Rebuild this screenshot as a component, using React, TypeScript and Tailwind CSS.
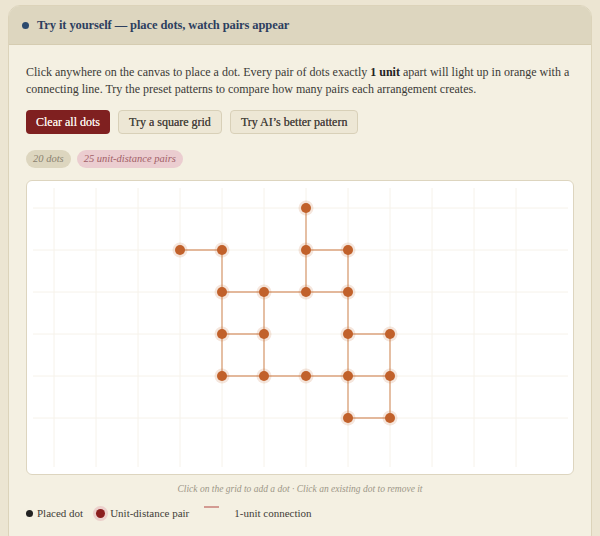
import React from "react";

const STEP = 42;
const OFF = 27;

// grid coordinates (column, row) of the placed dots
const DOTS: [number, number][] = [
  [3, 1], [4, 1], [6, 0], [6, 1], [7, 1],
  [4, 2], [5, 2], [6, 2], [7, 2],
  [4, 3], [5, 3], [7, 3], [8, 3],
  [4, 4], [5, 4], [6, 4], [7, 4], [8, 4],
  [7, 5], [8, 5],
];

function unitPairs() {
  const pairs: [number, number][] = [];
  for (let a = 0; a < DOTS.length; a++) {
    for (let b = a + 1; b < DOTS.length; b++) {
      const dx = DOTS[a][0] - DOTS[b][0];
      const dy = DOTS[a][1] - DOTS[b][1];
      if (dx * dx + dy * dy === 1) pairs.push([a, b]);
    }
  }
  return pairs;
}

const px = (i: number) => OFF + STEP * i;

function DotCanvas() {
  const pairs = unitPairs();
  return (
    <div className="mt-3 rounded-md border border-[#ddd5bf] bg-white overflow-hidden">
      <svg width="546" height="293" className="block">
        {Array.from({ length: 12 }, (_, k) => (
          <line key={"v" + k} x1={px(k)} x2={px(k)} y1={7} y2={286} stroke="#f6f2ea" strokeWidth="1" />
        ))}
        {Array.from({ length: 6 }, (_, k) => (
          <line key={"h" + k} x1={6} x2={541} y1={px(k)} y2={px(k)} stroke="#f6f2ea" strokeWidth="1" />
        ))}
        {pairs.map(([a, b]) => (
          <line
            key={a + "-" + b}
            x1={px(DOTS[a][0])}
            y1={px(DOTS[a][1])}
            x2={px(DOTS[b][0])}
            y2={px(DOTS[b][1])}
            stroke="#e3b89b"
            strokeWidth="1.8"
          />
        ))}
        {DOTS.map(([i, j]) => (
          <g key={i + "," + j}>
            <circle cx={px(i)} cy={px(j)} r="7.5" fill="#c1612b" opacity="0.16" />
            <circle cx={px(i)} cy={px(j)} r="5" fill="#c1612b" />
          </g>
        ))}
      </svg>
    </div>
  );
}

export default function App() {
  return (
    <div className="min-h-screen bg-[#ece5d2] px-2 pt-[5px] font-['Liberation_Serif',serif]">
      <div className="rounded-xl border border-[#dcd3ba] bg-[#f4f0e2] overflow-hidden pb-6">
        <div className="h-[39px] flex items-center gap-[8px] px-[13px] bg-[#ddd6bf] border-b border-[#d5ccb1]">
          <span className="w-[7px] h-[7px] rounded-full bg-[#2c4a6e]" />
          <h2 className="text-[12.5px] font-bold tracking-[-0.1px] text-[#2d3f5f]">
            Try it yourself — place dots, watch pairs appear
          </h2>
        </div>

        <div className="px-[17px] pt-[19px]">
          <p className="text-[12px] leading-[17px] text-[#3b3a36]">
            Click anywhere on the canvas to place a dot. Every pair of dots exactly{" "}
            <b className="text-[#222]">1 unit</b> apart will light up in orange with a connecting line.
            Try the preset patterns to compare how many pairs each arrangement creates.
          </p>

          <div className="flex gap-2 mt-3">
            <button className="h-6 px-[10px] rounded bg-[#7f2020] text-[12px] text-[#f8efe9] [text-shadow:0_0_0.4px_#f8efe9]">
              Clear all dots
            </button>
            <button className="h-6 px-[10px] rounded border border-[#d8d0b8] bg-[#ede7d5] text-[12px] text-[#4a463e] [text-shadow:0_0_0.4px_#4a463e]">
              Try a square grid
            </button>
            <button className="h-6 px-[10px] rounded border border-[#d8d0b8] bg-[#ede7d5] text-[12px] text-[#4a463e] [text-shadow:0_0_0.4px_#4a463e]">
              Try AI’s better pattern
            </button>
          </div>

          <div className="flex gap-[6px] mt-4">
            <span className="h-[18px] px-[7px] flex items-center rounded-full bg-[#ddd6bf] text-[10.5px] italic text-[#8a8270]">
              20 dots
            </span>
            <span className="h-[18px] px-[7px] flex items-center rounded-full bg-[#ebcdd0] text-[10.5px] italic text-[#a25f67]">
              25 unit-distance pairs
            </span>
          </div>

          <DotCanvas />

          <p className="mt-[8px] text-center text-[9.5px] leading-[13px] italic text-[#9c9687]">
            Click on the grid to add a dot · Click an existing dot to remove it
          </p>

          <div className="flex items-center mt-[9px] text-[11px] text-[#3f3d38]">
            <span className="w-[7px] h-[7px] rounded-full bg-[#222]" />
            <span className="ml-[4px]">Placed dot</span>
            <span className="ml-[13px] w-[9px] h-[9px] rounded-full bg-[#8b1e1e] ring-[3px] ring-[#ecd0cc]" />
            <span className="ml-[5px]">Unit-distance pair</span>
            <span className="ml-[15px] mb-[12px] w-[15px] h-[2px] bg-[#d39b92]" />
            <span className="ml-[15px]">1-unit connection</span>
          </div>
        </div>
      </div>
    </div>
  );
}
